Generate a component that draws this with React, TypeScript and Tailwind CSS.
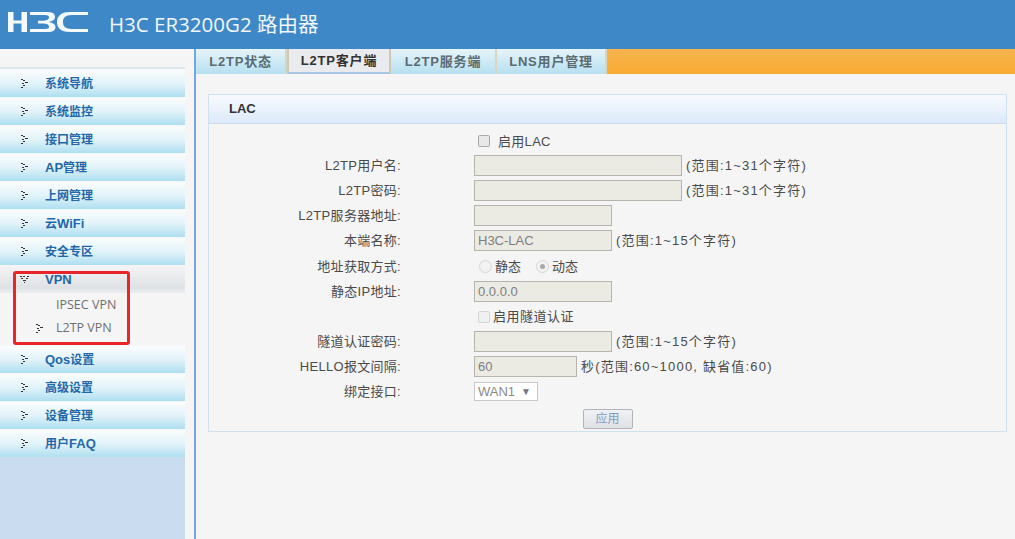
import React from "react";

const FONT = "font-['Liberation_Sans','Noto_Sans_CJK_SC',sans-serif]";

function Chevron({ down = false, className = "" }: { down?: boolean; className?: string }) {
  return (
    <svg width="9" height="9" viewBox="0 0 9 9" className={className} fill="#333">
      {down ? (
        <g>
          <rect x="0" y="1" width="2" height="1" />
          <rect x="3" y="1" width="2" height="1" />
          <rect x="7" y="1" width="2" height="1" />
          <rect x="1" y="3" width="2" height="1" />
          <rect x="6" y="3" width="2" height="1" />
          <rect x="3" y="5" width="3" height="1" />
          <rect x="4" y="7" width="1" height="1" />
        </g>
      ) : (
        <g>
          <rect x="1" y="0" width="2" height="1" />
          <rect x="3" y="1" width="2" height="1" />
          <rect x="5" y="3" width="3" height="1" />
          <rect x="2" y="4" width="2" height="1" />
          <rect x="3" y="6" width="2" height="1" />
          <rect x="1" y="8" width="2" height="1" />
        </g>
      )}
    </svg>
  );
}

function MenuLabel({ label }: { label: string }) {
  return (
    <span className="ml-[16px] text-[12px] font-bold text-[#2467a8] leading-none whitespace-nowrap">
      {label.split(/([A-Za-z]+)/).map((part, i) =>
        i % 2 === 1 ? (
          <span key={i} className="text-[13px]">{part}</span>
        ) : (
          <span key={i}>{part}</span>
        )
      )}
    </span>
  );
}

function MenuItem({ label }: { label: string }) {
  return (
    <div className="h-[28px] flex items-center pl-[20px] bg-gradient-to-b from-[#fbfdfe] via-[#e2f3fa] to-[#aedff0] border-t border-[#f4f8fb]">
      <Chevron />
      <MenuLabel label={label} />
    </div>
  );
}

function Tab({ label, w, active = false }: { label: string; w: string; active?: boolean }) {
  return (
    <div
      className={`${w} h-[25px] flex items-center justify-center text-[13px] font-bold tracking-[0.8px] ${
        active
          ? "bg-[#e9ebee] text-[#333] border-b-2 border-[#a9c6e4] border-x-2 border-x-[#cfc9b4]"
          : "bg-gradient-to-b from-[#e6f4fa] to-[#b6e0f0] text-[#5a6b72] border-r-2 border-[#d8d5c0]"
      }`}
    >
      {label}
    </div>
  );
}

function Row({ label, children, h = "h-[25px]" }: { label?: string; children: React.ReactNode; h?: string }) {
  return (
    <div className={`flex items-center ${h}`}>
      <div className="w-[192px] text-right text-[13px] tracking-[0.3px] text-[#4a4a4a] leading-none whitespace-nowrap">{label}</div>
      <div className="w-[73px]" />
      <div className="flex items-center text-[13px] text-[#4a4a4a] leading-none">{children}</div>
    </div>
  );
}

function Input({ w, value = "" }: { w: string; value?: string }) {
  return (
    <div className={`${w} h-[21px] bg-[#ebebe4] border border-[#b5b5ad] flex items-center pl-[3px] text-[13px] text-[#7e7e7e]`}>
      {value}
    </div>
  );
}

function Hint({ children }: { children: React.ReactNode }) {
  return <span className="ml-[4px] text-[#4a4a4a] text-[13px] tracking-[1.2px] whitespace-nowrap">{children}</span>;
}

function Radio({ checked = false }: { checked?: boolean }) {
  return (
    <span className="w-[13px] h-[13px] rounded-full border border-[#d6d6d6] bg-[#f2f2f2] flex items-center justify-center">
      {checked && <span className="w-[5px] h-[5px] rounded-full bg-[#a8a8a8]" />}
    </span>
  );
}

export default function App() {
  return (
    <div className={`w-[1015px] h-[539px] overflow-hidden flex flex-col bg-[#f5f5f6] ${FONT}`}>
      <header className="h-[49px] bg-[#3f88c8] flex items-center shrink-0">
        <svg width="80" height="20" viewBox="0 0 80 20" className="ml-[8px] mb-[6px]" fill="#f4f9fc">
          <path d="M0 0H5.5V8.5H13.5V0H19V20H13.5V11.5H5.5V20H0Z" />
          <path d="M22 0H40C46 0 47 3 47 5C47 8 44 9 41 10C45 11 47.5 12.5 47.5 15C47.5 18 45 20 40 20H22V17H37C40 17 41 16 41 15C41 12.5 39 11.5 34 11.5H30V8.8H34C38 8.8 41 7.5 41 5.5C41 4 40 3 37 3H22Z" />
          <path d="M80 0H62C52 0 49 5 49 10C49 15 52 20 62 20H80V17H64C57 17 55 14 55 10C55 6 57 3 64 3H80Z" />
        </svg>
        <h1 className="ml-[21px] text-[20.5px] font-normal font-['Open_Sans','Noto_Sans_CJK_SC',sans-serif] text-[#f2f7fb] leading-none whitespace-nowrap">H3C ER3200G2 路由器</h1>
      </header>
      <div className="flex-1 flex min-h-0">
        <aside className="relative w-[185px] shrink-0 flex flex-col">
          <div className="h-[20px] bg-[#f5f5f6] border-b-2 border-[#dfe6ec] shrink-0" />
          <MenuItem label="系统导航" />
          <MenuItem label="系统监控" />
          <MenuItem label="接口管理" />
          <MenuItem label="AP管理" />
          <MenuItem label="上网管理" />
          <MenuItem label="云WiFi" />
          <MenuItem label="安全专区" />
          <div className="h-[28px] flex items-center pl-[20px] bg-gradient-to-b from-[#f5f5f6] via-[#dfe2e6] via-80% to-[#eceef0]">
            <Chevron down />
            <MenuLabel label="VPN" />
          </div>
          <div className="h-[52px] pt-[1px] bg-[#f5f5f6] flex flex-col font-['Open_Sans','Noto_Sans_CJK_SC',sans-serif]">
            <div className="h-[23px] flex items-center pl-[56px] text-[12.5px] text-[#6f6f6f]">IPSEC VPN</div>
            <div className="h-[23px] flex items-center pl-[35px] text-[12.5px] text-[#6f6f6f]">
              <Chevron className="mr-[12px]" />
              L2TP VPN
            </div>
          </div>
          <MenuItem label="Qos设置" />
          <MenuItem label="高级设置" />
          <MenuItem label="设备管理" />
          <MenuItem label="用户FAQ" />
          <div className="flex-1 bg-[#c9dcf0]" />
          <div className="absolute left-[13px] top-[222px] w-[117px] h-[74px] border-[3px] border-[#e8262a] rounded-[3px]" />
        </aside>
        <div className="w-[9px] shrink-0 bg-[#f5f5f6]" />
        <div className="w-[2px] shrink-0 bg-[#74a7dd]" />
        <main className="flex-1 min-w-0 flex flex-col">
          <nav className="h-[25px] flex shrink-0">
            <Tab label="L2TP状态" w="w-[91px]" />
            <Tab label="L2TP客户端" w="w-[104px]" active />
            <Tab label="L2TP服务端" w="w-[106px]" />
            <Tab label="LNS用户管理" w="w-[110px]" />
            <div className="flex-1 bg-gradient-to-b from-[#f6b44e] to-[#f9ab31]" />
          </nav>
          <section className="mt-[20px] ml-[12px] w-[799px] h-[338px] border border-[#cfe0ef] flex flex-col">
            <div className="h-[29px] flex items-center pl-[20px] bg-gradient-to-b from-[#f8fbfe] to-[#dceafa] border-b border-[#c9dced] text-[13px] font-bold text-[#333] shrink-0">
              LAC
            </div>
            <div className="flex flex-col pt-[5px]">
              <Row h="h-[24px]">
                <span className="w-[12px] h-[12px] ml-[4px] rounded-[2px] border border-[#aaa] bg-[#e8e8e8]" />
                <span className="ml-[8px] tracking-[0.3px]">启用LAC</span>
              </Row>
              <Row label="L2TP用户名:"><Input w="w-[208px]" /><Hint>(范围:1~31个字符)</Hint></Row>
              <Row label="L2TP密码:"><Input w="w-[208px]" /><Hint>(范围:1~31个字符)</Hint></Row>
              <Row label="L2TP服务器地址:"><Input w="w-[138px]" /></Row>
              <Row label="本端名称:"><Input w="w-[138px]" value="H3C-LAC" /><Hint>(范围:1~15个字符)</Hint></Row>
              <Row label="地址获取方式:" h="h-[26px]">
                <span className="ml-[5px]"><Radio /></span>
                <span className="ml-[3px]">静态</span>
                <span className="ml-[15px]"><Radio checked /></span>
                <span className="ml-[3px]">动态</span>
              </Row>
              <Row label="静态IP地址:"><Input w="w-[138px]" value="0.0.0.0" /></Row>
              <Row>
                <span className="w-[12px] h-[12px] ml-[4px] rounded-[2px] border border-[#d5d5d5] bg-[#f0f0f0]" />
                <span className="ml-[3px] tracking-[0.5px]">启用隧道认证</span>
              </Row>
              <Row label="隧道认证密码:"><Input w="w-[138px]" /><Hint>(范围:1~15个字符)</Hint></Row>
              <Row label="HELLO报文间隔:"><Input w="w-[103px]" value="60" /><Hint>秒(范围:60~1000, 缺省值:60)</Hint></Row>
              <Row label="绑定接口:">
                <div className="w-[64px] h-[19px] bg-white border border-[#c8c8c8] flex items-center pl-[3px] text-[13px] text-[#8a8a8a]">
                  WAN1
                  <span className="ml-[6px] text-[10px] text-[#777]">▼</span>
                </div>
              </Row>
              <div className="flex justify-center mt-[5px]">
                <div className="w-[50px] h-[20px] bg-gradient-to-b from-[#f0f1f3] to-[#dfe1e5] border border-[#b0b4ba] rounded-[2px] flex items-center justify-center text-[12px] text-[#7d9cc4]">
                  应用
                </div>
              </div>
            </div>
          </section>
        </main>
      </div>
    </div>
  );
}
